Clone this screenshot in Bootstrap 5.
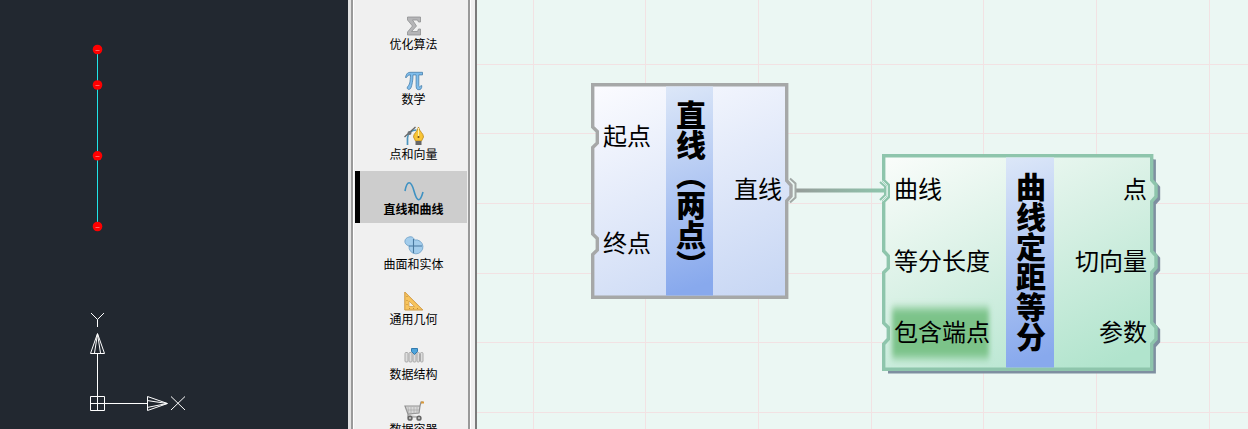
<!DOCTYPE html>
<html lang="zh-CN">
<head>
<meta charset="utf-8">
<meta name="viewport" content="width=device-width, initial-scale=1">
<title>节点编辑器</title>
<link href="https://cdn.jsdelivr.net/npm/bootstrap@5.3.0/dist/css/bootstrap.min.css" rel="stylesheet">
<style>
body{font-family:"Noto Sans CJK SC",sans-serif;color:#000;height:429px}
.cad{width:348px;background:#222830}
.tools{width:129px;background:#f0f0f0;border-left:3px solid #e3e3e3;border-right:2px solid #7b7b7b}
.tool-list{width:119px;border-left:2px solid #9a9a9a;border-right:2px solid #999;box-shadow:inset 1px 0 #fff,1px 0 #fff;padding-top:6px}
.tool{height:52px;margin:0 0 3px 2px;width:112px;font-size:12px;line-height:16px;padding:10px 0 0 5px}
.tool svg{width:20px;height:20px;margin-bottom:0}
.tool.active{background:#cdcdcd;font-weight:700;border-left:5px solid #000;padding-left:0}
.board{background:#ebf7f3}
.node{font-size:24px;line-height:30px}
.node .side{position:relative}
.node-a{left:114px;top:83px;width:198px;height:216px}
.node-b{left:405px;top:154px;width:274px;height:218px}
.shape{left:0;top:0;overflow:visible}
.title{writing-mode:vertical-rl;font-weight:900;font-size:30px;line-height:45px;width:47px;height:100%;white-space:nowrap}
.node-a .title{padding-top:17px}
.node-b .title{padding-top:18px}
.node-a .inputs{width:75px;padding:37px 0 0 12px}
.node-a .outputs{width:76px;padding:90px 7px 0 0}
.node-b .inputs{width:124px;padding:19px 0 0 12px}
.node-b .outputs{width:103px;padding:19px 9px 0 0}
.gap-a{gap:77px}.gap-b{gap:41.5px}
</style>
<script src="https://cdn.jsdelivr.net/npm/bootstrap@5.3.0/dist/js/bootstrap.bundle.min.js"></script>
</head>
<body class="d-flex overflow-hidden">
<section class="cad flex-shrink-0">
<svg width="348" height="429" fill="none" stroke="#fff">
<path d="M97.500 49V226" stroke="#20e5e8"/>
<g fill="#f00" stroke="none"><circle cx="97.500" cy="49.500" r="4.800"/><circle cx="97.500" cy="85" r="4.800"/><circle cx="97.500" cy="155.800" r="4.800"/><circle cx="97.500" cy="226.500" r="4.800"/></g>
<path d="M95.500 50.500h4M95.500 85.500h4M95.500 156.500h4M95.500 227.500h4" stroke="#ff6262"/>
<path d="M90.500 396.500h14v14h-14zM97.500 353V410M90 403.500H147M90.500 353.500h14L97.500 333.500zM94.500 353l3-19 3 19M147.500 396.500v14l20-7zM147 400.500l20 3-20 4"/>
<path d="M91 313l6.500 6.500 6.500-6.500M97.500 319.500v7.500M171 396.500l14 13.500M185 396.500l-14 13.500"/>
</svg>
</section>
<nav class="tools flex-shrink-0">
<div class="tool-list h-100">
<div class="tool d-flex flex-column align-items-center"><svg viewBox="0 0 20 20"><path d="M3.500 1h13v5h-2l-1-2h-5l4 6-5 5.500h6l1-2.500h2v6h-13v-3l5-6-5-6z" fill="#b5b5b7" stroke="#8f9092" stroke-width=".8"/></svg><span>优化算法</span></div>
<div class="tool d-flex flex-column align-items-center"><svg viewBox="0 0 20 20"><path d="M1.500 6.500C2.500 2 4 1.300 7 1.300h11.500v2.600h-3.700v10.500c0 2 1.200 2 2 .3h1c0 3-1 4-3 4-2.600 0-2.700-2-2.700-5V3.900H9c0 6-1 10-2 12.800-1 2.700-4.500 2-3.700-.7 2.300-2 3-5 3.200-12.100-2 0-3 .6-4 2.600z" fill="#7fbdec" stroke="#477fa9" stroke-width=".8"/></svg><span>数学</span></div>
<div class="tool d-flex flex-column align-items-center"><svg viewBox="0 0 20 20"><path d="M3.500 19V12c0-5 4-8 9-8" fill="none" stroke="#4a94bd" stroke-width="1.700"/><path d="M.5 11L11.500 1" stroke="#666" stroke-width="1.300"/><circle cx="5.500" cy="7" r="2" fill="#6c7175"/><path d="M14.500 1c-1 5-5 6-5 10l2 4h6l2-4c0-4-4-5-5-10z" fill="#f8c536" stroke="#be8615" stroke-width=".8"/><path d="M14.500 2v8" stroke="#fff1a5"/><circle cx="14.500" cy="11" r="1" fill="#704c15"/><path d="M11.500 15h6v4h-6z" fill="#666"/></svg><span>点和向量</span></div>
<div class="tool active d-flex flex-column align-items-center"><svg viewBox="0 0 20 20"><path d="M1 10C3-1 7-1 10 10s6 12 9 1" fill="none" stroke="#3e91c2" stroke-width="1.600"/></svg><span>直线和曲线</span></div>
<div class="tool d-flex flex-column align-items-center"><svg viewBox="0 0 20 20"><path d="M5 1c3-1 5 1 5.500 3a7 7 0 1 1-5.500 6C-1 8 0 2 5 1z" fill="#a3cdec" stroke="#6da0c6" stroke-width=".8"/><path d="M5 10h13M9.500 3v14" stroke="#49799f" stroke-width="1.100"/></svg><span>曲面和实体</span></div>
<div class="tool d-flex flex-column align-items-center"><svg viewBox="0 0 20 20"><path d="M.8 1v18h18z" fill="#f7c45e" stroke="#cf9941"/><path d="M5 10v5.500h5.500z" fill="#f3f1ec" stroke="#cf9941" stroke-width=".7"/><path d="M3 5v1M3 9v1M3 13v1M5 17.500h1M9 17.500h1M13 17.500h1" stroke="#c08a35"/></svg><span>通用几何</span></div>
<div class="tool d-flex flex-column align-items-center"><svg viewBox="0 0 20 20"><g fill="#ddd" stroke="#aaa" transform="translate(0 1)"><rect x="1" y="5.500" width="3" height="9.500" rx="1"/><rect x="5" y="5.500" width="3" height="9.500" rx="1"/><rect x="9" y="5.500" width="3" height="9.500" rx="1"/><rect x="13" y="5.500" width="2.500" height="9.500" rx="1"/><rect x="16.500" y="5.500" width="2.500" height="9.500" rx="1"/></g><path d="M7.500 2.500h6v3l-3 3-3-3z" fill="#4fa4db" stroke="#337bae"/></svg><span>数据结构</span></div>
<div class="tool d-flex flex-column align-items-center"><svg viewBox="0 0 20 20"><path d="M1 5h15l-1 7-11 1zM16 5l1-4h2M4 13v3h13" fill="#d9d9d9" stroke="#919191" stroke-width="1.200"/><path d="M4 6l1 7M7 6v7M10 6v7M13 6v7M2 9h13" stroke="#aaa" stroke-width=".7"/><path d="M17 1.500h3" stroke="#d99839" stroke-width="2"/><g fill="#bbb" stroke="#666" stroke-width="1.500"><circle cx="6" cy="17.200" r="1.900"/><circle cx="15" cy="17.200" r="1.900"/></g></svg><span>数据容器</span></div>
</div>
</nav>
<main class="board position-relative flex-grow-1 overflow-hidden">
<svg class="position-absolute shape" width="771" height="429">
<defs>
<linearGradient id="wire" gradientUnits="userSpaceOnUse" x1="320" x2="407" y1="0" y2="0"><stop stop-color="#969d9a"/><stop offset="1" stop-color="#8ec5ac"/></linearGradient>
<linearGradient id="blue" gradientUnits="userSpaceOnUse" x1="0" y1="0" x2="110" y2="240"><stop stop-color="#fcfcff"/><stop offset="1" stop-color="#c8d7f4"/></linearGradient>
<linearGradient id="green" gradientUnits="userSpaceOnUse" x1="0" y1="0" x2="130" y2="260"><stop stop-color="#fbfdfb"/><stop offset=".5" stop-color="#d7f0e4"/><stop offset="1" stop-color="#b1e4cd"/></linearGradient>
<linearGradient id="band" x2="0" y2="1" gradientTransform="rotate(-4)"><stop stop-color="#dce7f8"/><stop offset="1" stop-color="#88a9ed"/></linearGradient>
<filter id="soft" x="-20%" y="-20%" width="140%" height="140%"><feGaussianBlur stdDeviation="2.500 4.500"/></filter>
</defs>
<path d="M56.500 0V429M168.500 0V429M281.500 0V429M394.500 0V429M506.500 0V429M619.500 0V429M732.500 0V429M0 64.500H771M0 133.500H771M0 203.500H771M0 273.500H771M0 342.500H771M0 412.500H771" stroke="#f2e2e3"/>
</svg>
<article class="node node-a position-absolute d-flex">
<svg class="position-absolute shape" width="198" height="216"><path d="M1.700 1.700H195.700V97.500L200 102.500V113L195.700 118V214.300H1.700V171.500L6.300 167V155.500L1.700 151V64.500L6.300 60V48.500L1.700 44z" fill="url(#blue)" stroke="#a6a8a8" stroke-width="3.400"/><path d="M75 3.500h47V212.500h-47z" fill="url(#band)"/></svg>
<div class="side inputs d-flex flex-column gap-a"><span>起点</span><span>终点</span></div>
<div class="side title">直线（两点）</div>
<div class="side outputs text-end">直线</div>
</article>
<article class="node node-b position-absolute d-flex">
<svg class="position-absolute shape" width="274" height="218"><clipPath id="drop"><path d="M3.500 3h290v230h-290z"/></clipPath><path d="M269.700 1.700V26L274 31V42.500L269.700 47.500V97L274 102V113.500L269.700 118.500V168.500L274 173.500V185L269.700 190V215.300H1.700V190L6.300 185V173.500L1.700 169V118.500L6.300 114V102L1.700 97V47.500L6.300 43V31L1.700 26.500V1.700z" fill="#7e8fa0" stroke="#7e8fa0" stroke-width="3.400" transform="translate(2.500 2.500)" clip-path="url(#drop)"/>
<path d="M269.700 1.700V26L274 31V42.500L269.700 47.500V97L274 102V113.500L269.700 118.500V168.500L274 173.500V185L269.700 190V215.300H1.700V190L6.300 185V173.500L1.700 169V118.500L6.300 114V102L1.700 97V47.500L6.300 43V31L1.700 26.500V1.700z" fill="url(#green)" stroke="#8ec5ac" stroke-width="3.400"/><path d="M124 3.500h48V213.500h-48z" fill="url(#band)"/><rect x="10" y="154" width="97" height="50" fill="#7bc389" filter="url(#soft)"/></svg>
<div class="side inputs d-flex flex-column gap-b"><span>曲线</span><span>等分长度</span><span>包含端点</span></div>
<div class="side title">曲线定距等分</div>
<div class="side outputs d-flex flex-column gap-b text-end"><span>点</span><span>切向量</span><span>参数</span></div>
</article>
<svg class="position-absolute shape pe-none" width="771" height="429" fill="none"><path d="M319 188.500h90v4h-90z" fill="url(#wire)"/><path d="M313 178.500l5.500 5v14l-5.500 5" stroke="#a2a9a6" stroke-width="2"/><path d="M403 182l5 4.500v8.500l-5 5" stroke="#8ec5ac" stroke-width="2"/><path d="M405.500 180.500l5 5v11l-5 5" stroke="#d6eee3" stroke-width="1"/></svg>
</main>
</body>
</html>
